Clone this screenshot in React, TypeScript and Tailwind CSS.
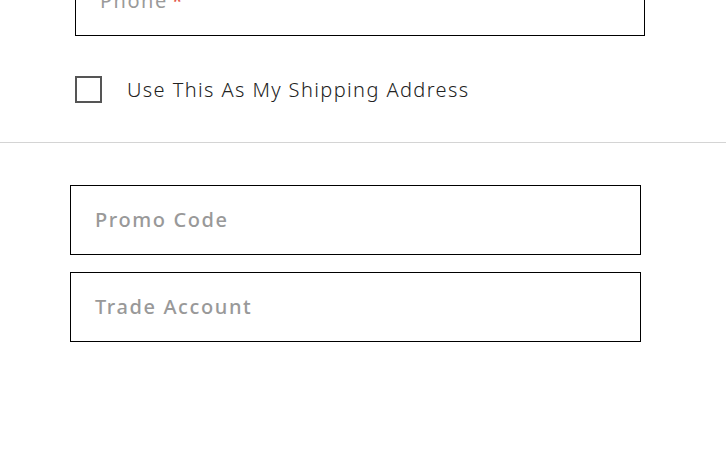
export default function App() {
  return (
    <div className="w-[726px] h-[456px] overflow-hidden bg-white" style={{ fontFamily: '"Noto Sans", Lato, sans-serif' }}>
      <div className="pl-[75px] pr-[81px]">
        <div className="-mt-[35px] h-[71px] border border-black flex items-center pl-6 text-[20px] tracking-[1.5px] text-[#9a9a9a]">
          Phone <span className="ml-1 text-[#e2574c]">*</span>
        </div>
        <label className="mt-[40px] flex items-center gap-[25px] h-[27px]">
          <span className="w-[27px] h-[27px] border-2 border-[#555] bg-white" />
          <span className="text-[20px] font-light tracking-[1.4px] text-[#222]">Use This As My Shipping Address</span>
        </label>
      </div>
      <div className="mt-[39px] h-px bg-[#d4d4d4]" />
      <div className="pl-[70px] pr-[85px] pt-[42px] flex flex-col gap-[17px]">
        <div className="h-[70px] border border-black flex items-center pl-6 text-[20px] font-medium tracking-[1.6px] text-[#999]">
          Promo Code
        </div>
        <div className="h-[70px] border border-black flex items-center pl-6 text-[20px] font-medium tracking-[1.6px] text-[#999]">
          Trade Account
        </div>
      </div>
    </div>
  )
}
